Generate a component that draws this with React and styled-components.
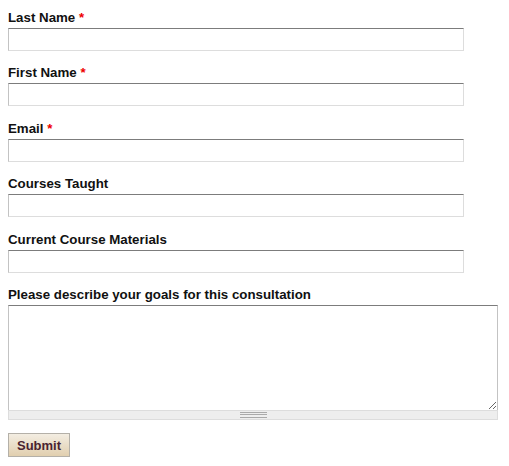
import styled, { createGlobalStyle } from "styled-components";

const Global = createGlobalStyle`
  body {
    margin: 0;
    background: #fff;
    font-family: "Liberation Sans", Arial, sans-serif;
  }
`;

const Form = styled.form`
  padding: 9px 8px 0 8px;
  display: flex;
  flex-direction: column;
`;

const Field = styled.div`
  display: flex;
  flex-direction: column;
  margin-bottom: 13.4px;
`;

const Label = styled.label`
  font-size: 13.3px;
  font-weight: bold;
  color: #111;
  line-height: 16px;
  padding-top: 1px;
  margin-bottom: 2px;

  span {
    color: #e00;
  }
`;

const Input = styled.input`
  box-sizing: border-box;
  width: 456px;
  height: 23px;
  margin: 0;
  padding: 2px 4px;
  border: 1px solid #ddd;
  border-top-color: #7c7c7c;
  border-left-color: #c3c3c3;
  background: #fff;
  font-size: 13px;
`;

const AreaWrap = styled.div`
  width: 490px;
  display: flex;
  flex-direction: column;
`;

const TextArea = styled.textarea`
  box-sizing: border-box;
  width: 490px;
  height: 105px;
  margin: 0;
  display: block;
  border: 1px solid #ddd;
  border-top-color: #7c7c7c;
  border-left-color: #c3c3c3;
  border-right-color: #c3c3c3;
  border-bottom: none;
  resize: vertical;
`;

const Grippie = styled.div`
  box-sizing: border-box;
  height: 10px;
  background: #eee;
  border: 1px solid #ddd;
  display: flex;
  align-items: center;
  justify-content: center;

  &::before {
    content: "";
    width: 27px;
    height: 4px;
    border-top: 1px solid #aaa;
    border-bottom: 1px solid #aaa;
    background: linear-gradient(#eee 0 1px, #aaa 1px 2px, #eee 2px);
  }
`;

const Submit = styled.button`
  align-self: flex-start;
  width: 62px;
  height: 24px;
  font-family: "Liberation Sans", Arial, sans-serif;
  font-size: 13px;
  font-weight: bold;
  color: #4a2430;
  background: linear-gradient(#f3ede2, #e1cfaf);
  border: 1px solid #b4b0a8;
  padding: 0;
`;

const fields = [
  { label: "Last Name", required: true },
  { label: "First Name", required: true },
  { label: "Email", required: true },
  { label: "Courses Taught" },
  { label: "Current Course Materials" },
];

export default function App() {
  return (
    <>
      <Global />
      <Form onSubmit={(e) => e.preventDefault()}>
        {fields.map((f) => (
          <Field key={f.label}>
            <Label>
              {f.label} {f.required && <span>*</span>}
            </Label>
            <Input type="text" />
          </Field>
        ))}
        <Field>
          <Label>Please describe your goals for this consultation</Label>
          <AreaWrap>
            <TextArea />
            <Grippie />
          </AreaWrap>
        </Field>
        <Submit type="submit">Submit</Submit>
      </Form>
    </>
  );
}
